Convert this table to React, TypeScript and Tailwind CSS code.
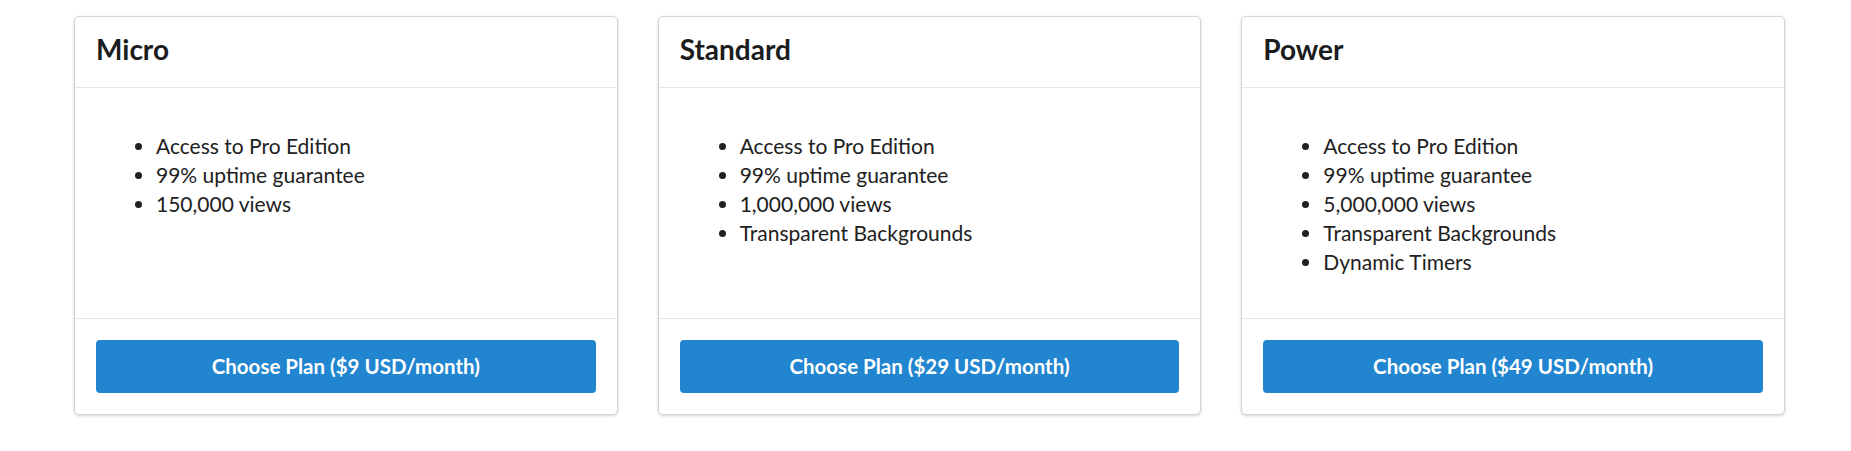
import React from "react";

const plans = [
  {
    name: "Micro",
    price: "$9",
    features: ["Access to Pro Edition", "99% uptime guarantee", "150,000 views"],
  },
  {
    name: "Standard",
    price: "$29",
    features: [
      "Access to Pro Edition",
      "99% uptime guarantee",
      "1,000,000 views",
      "Transparent Backgrounds",
    ],
  },
  {
    name: "Power",
    price: "$49",
    features: [
      "Access to Pro Edition",
      "99% uptime guarantee",
      "5,000,000 views",
      "Transparent Backgrounds",
      "Dynamic Timers",
    ],
  },
];

export default function App() {
  return (
    <div
      className="w-[1851px] h-[451px] bg-white pt-[16px] pl-[74px]"
      style={{ fontFamily: "Lato, 'Liberation Sans', sans-serif" }}
    >
      <div className="grid grid-cols-3 gap-x-[40px] w-[1711px]">
        {plans.map((p) => (
          <div
            key={p.name}
            className="flex flex-col bg-white border border-[#d4d4d5] rounded-[5px] shadow-[0_1px_3px_0_#d4d4d5]"
          >
            <div className="px-[21px] pt-[16px] pb-[22px] border-b border-[#e6e6e6]">
              <h2 className="text-[28px] leading-[32px] font-bold text-[#1b1c1d]">
                {p.name}
              </h2>
            </div>
            <div className="flex-1 px-[21px] pt-[43px] pb-[42px]">
              <ul className="list-disc pl-[60px] text-[21px] leading-[29px] text-[#212121]">
                {p.features.map((f) => (
                  <li key={f}>{f}</li>
                ))}
              </ul>
            </div>
            <div className="p-[21px] border-t border-[#e6e6e6]">
              <button className="w-full h-[53px] rounded-[4px] bg-[#2185d0] text-white font-bold text-[20.5px]">
                Choose Plan ({p.price} USD/month)
              </button>
            </div>
          </div>
        ))}
      </div>
    </div>
  );
}
